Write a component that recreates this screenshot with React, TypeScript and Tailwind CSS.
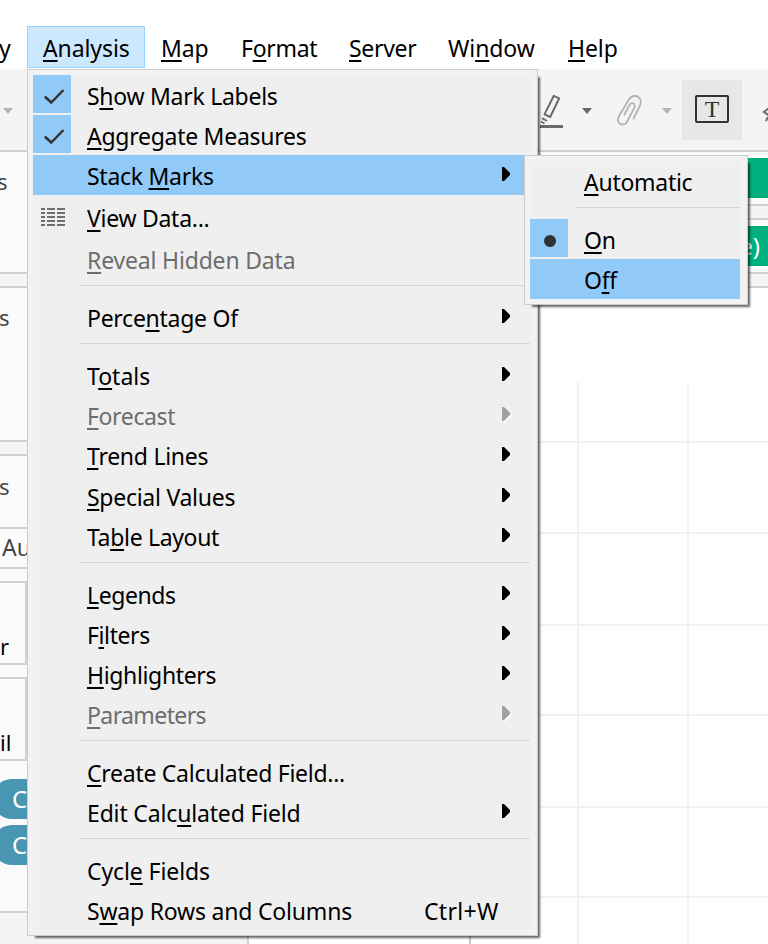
import { Fragment } from "react";
import { clsx } from "clsx";

type Item = {
  label: string;
  // index of the underlined access key
  hotkey: number;
  submenu?: boolean;
  disabled?: boolean;
  active?: boolean;
  mark?: "check" | "dot" | "grid";
  shortcut?: string;
  height?: string;
  tracking?: string;
};

const menuBar = [
  { label: "Analysis", hotkey: 0, className: "w-[118px] border border-[#99d1ff] bg-[#cce8ff] pl-[15px] leading-[42px]" },
  { label: "Map", hotkey: 0, className: "w-[80px] pl-4 leading-[44px]" },
  { label: "Format", hotkey: 1, className: "w-[108px] pl-4 leading-[44px] tracking-[-0.3px]" },
  { label: "Server", hotkey: 0, className: "w-[99px] pl-4 leading-[44px] tracking-[-0.3px]" },
  { label: "Window", hotkey: 2, className: "w-[120px] pl-4 leading-[44px]" },
  { label: "Help", hotkey: 0, className: "w-[90px] pl-4 leading-[44px]" },
];

const analysisMenu: Item[][] = [
  [
    { label: "Show Mark Labels", hotkey: 1, mark: "check" },
    { label: "Aggregate Measures", hotkey: 0, mark: "check" },
    { label: "Stack Marks", hotkey: 6, submenu: true, active: true },
    { label: "View Data...", hotkey: 0, mark: "grid", height: "h-11 py-0.5" },
    { label: "Reveal Hidden Data", hotkey: 0, disabled: true, tracking: "tracking-[-0.18px]" },
  ],
  [{ label: "Percentage Of", hotkey: 5, submenu: true }],
  [
    { label: "Totals", hotkey: 1, submenu: true, tracking: "tracking-normal" },
    { label: "Forecast", hotkey: 0, submenu: true, disabled: true, tracking: "tracking-[-0.37px]" },
    { label: "Trend Lines", hotkey: 0, submenu: true, height: "h-[41px] pb-px" },
    { label: "Special Values", hotkey: 0, submenu: true },
    { label: "Table Layout", hotkey: 2, submenu: true, tracking: "tracking-[-0.33px]" },
  ],
  [
    { label: "Legends", hotkey: 0, submenu: true, tracking: "tracking-[-0.4px]" },
    { label: "Filters", hotkey: 1, submenu: true, tracking: "tracking-[-0.4px]" },
    { label: "Highlighters", hotkey: 0, submenu: true, tracking: "tracking-[-0.35px]" },
    { label: "Parameters", hotkey: 0, submenu: true, disabled: true, tracking: "tracking-[-0.6px]" },
  ],
  [
    { label: "Create Calculated Field...", hotkey: 0 },
    { label: "Edit Calculated Field", hotkey: 9, submenu: true, tracking: "tracking-[-0.16px]" },
  ],
  [
    { label: "Cycle Fields", hotkey: 4, tracking: "tracking-[-0.1px]" },
    { label: "Swap Rows and Columns", hotkey: 1, shortcut: "Ctrl+W", tracking: "tracking-[-0.2px]" },
  ],
];

const stackMenu: Item[][] = [
  [{ label: "Automatic", hotkey: 0 }],
  [
    { label: "On", hotkey: 0, mark: "dot" },
    { label: "Off", hotkey: 1, active: true },
  ],
];

function Label({ text, hotkey }: { text: string; hotkey: number }) {
  return (
    <span className="whitespace-pre">
      {text.slice(0, hotkey)}
      <span className="underline decoration-2 underline-offset-[3px] [text-decoration-skip-ink:none]">
        {text[hotkey]}
      </span>
      {text.slice(hotkey + 1)}
    </span>
  );
}

function Mark({ mark }: { mark: Item["mark"] }) {
  if (mark === "grid") {
    return (
      <svg width="38" height="38" viewBox="0 0 38 38" shapeRendering="crispEdges">
        {[12, 16, 20, 24, 28].map((y) => (
          <path key={y} d={`M8 ${y}h4M14 ${y}h8M24 ${y}h8`} stroke="#6d6d6d" strokeWidth="2" />
        ))}
      </svg>
    );
  }
  return (
    <svg width="38" height="38" viewBox="0 0 38 38" className="bg-[#91c9f7]">
      {mark === "check" ? (
        <path d="M11.8 21.5l6.4 6L30.5 15" fill="none" stroke="#333" strokeWidth="2.4" />
      ) : (
        <circle cx="20" cy="22" r="6" fill="#2f3333" />
      )}
    </svg>
  );
}

function SubmenuArrow({ disabled }: { disabled?: boolean }) {
  return (
    <svg width="10" height="16" viewBox="0 0 10 16" className="mr-[18px] shrink-0">
      {disabled && <path d="M2 2v14l8-7z" fill="#fff" />}
      <path d="M0 0h2l6 6v2l-6 6h-2z" fill={disabled ? "#a0a0a0" : "#000"} />
    </svg>
  );
}

function Menu({ groups, className }: { groups: Item[][]; className: string }) {
  return (
    <div
      className={clsx(
        "absolute border border-[#ccc] bg-[#f2f2f2] py-[5px] pl-[5px] pr-[7px] shadow-[5px_5px_2px_-3px_rgba(0,0,0,0.6)]",
        className
      )}
    >
      <div className="bg-[#efefef]">
        {groups.map((group, i) => (
          <Fragment key={i}>
            {i > 0 && (
              <div className="h-[18px] pl-[46px] pt-1.5">
                <div className="h-px bg-[#d7d7d7]" />
              </div>
            )}
            {group.map((item) => (
              <div
                key={item.label}
                className={clsx(
                  "flex",
                  item.height ?? "h-10",
                  item.tracking ?? "tracking-[-0.27px]",
                  item.active && "bg-[#91c9f7]",
                  item.disabled ? "text-[#6d6d6d]" : "text-black"
                )}
              >
                <div className="w-[54px] shrink-0">{item.mark && <Mark mark={item.mark} />}</div>
                <div className="flex-1 leading-[42px]">
                  <Label text={item.label} hotkey={item.hotkey} />
                </div>
                {item.shortcut && <div className="w-[106px] tracking-[0.3px] leading-[42px]">{item.shortcut}</div>}
                {item.submenu && (
                  <div className="flex h-10 items-center">
                    <SubmenuArrow disabled={item.disabled} />
                  </div>
                )}
              </div>
            ))}
          </Fragment>
        ))}
      </div>
    </div>
  );
}

function Caret({ color, className }: { color: string; className?: string }) {
  return (
    <svg width="10" height="6" viewBox="0 0 10 6" className={clsx("shrink-0", className)}>
      <path d="M0 0h10L5 6z" fill={color} />
    </svg>
  );
}

function Toolbar() {
  return (
    <div className="flex h-[83px] items-start border-b-2 border-[#d1d1d1] bg-[#f4f4f4]">
      <Caret color="#b3b3b3" className="ml-[3px] mt-[39px]" />
      <svg width="24" height="36" viewBox="0 0 24 36" className="ml-[526px] mt-6 shrink-0" fill="none" stroke="#6a6a6a" strokeWidth="2">
        <path d="M14.8 2.8L20.2 5.300 11.200 24 5.500 21.400z" strokeLinejoin="round" />
        <path d="M3 25.200l5 2.800M2 28.500l3.500 2" />
        <path d="M1 33.500h23" strokeWidth="3" />
      </svg>
      <Caret color="#6a6a6a" className="ml-[19px] mt-[39px]" />
      <svg width="26" height="32" viewBox="0 0 26 32" className="ml-6 mt-[25px] shrink-0" fill="none" stroke="#b3b3b3" strokeWidth="1.8" strokeLinecap="round">
        <path d="M17.500 24.500L23.500 12.500C27 5.500 22.500 2 19 2c-4 0-5.500 2-7 5L3 22c-4 8.500 5.500 11.500 8.500 5l6.700-13c2-5-3-6.500-5-2.500L8.500 20.500" />
      </svg>
      <Caret color="#b3b3b3" className="ml-5 mt-[39px]" />
      <div className="ml-[10px] mt-[11px] flex h-[60px] w-[60px] shrink-0 items-start justify-center bg-[#e6e8e8] pt-[15px]">
        <div className="h-7 w-[34px] rounded-xs border-2 border-[#333] text-center font-['Liberation_Serif',serif] text-2xl leading-[25px] text-[#333]">
          T
        </div>
      </div>
      <svg width="6" height="20" viewBox="0 0 6 20" className="ml-5 mt-[34px] shrink-0" fill="none" stroke="#6a6a6a" strokeWidth="2">
        <path d="M7 5L2 9l5 3.500M4 18l2-4" />
      </svg>
    </div>
  );
}

function SidePanel() {
  const heading = "bg-[#fafafa] text-[22px] text-[#444] border-[#d1d1d1]";
  const card = "mt-3 flex h-[84px] w-[27px] items-end border-y-2 border-r-2 border-[#d1d1d1] leading-[34px] text-black";
  const pill = "-ml-2 h-10 w-[200px] rounded-full bg-[#4996b2] pl-5 text-2xl leading-[39px] text-white";
  return (
    <div className="w-[249px] shrink-0 border-r-2 border-[#d1d1d1] bg-[#f4f4f4]">
      <div className={clsx(heading, "h-[122px] border-b-2 pt-[13px] leading-8")}>
        <span className="-ml-[3px]">s</span>
      </div>
      <div className={clsx(heading, "mt-3 h-[156px] border-y-2 pt-[13px] leading-8")}>
        <span className="-ml-px">s</span>
      </div>
      <div className={clsx(heading, "mt-3 h-[459px] border-y-2 pt-[14px]")}>
        <div className="h-[57px] leading-8">
          <span className="-ml-px">s</span>
        </div>
        <div className="h-[42px] border-y-2 border-[#d1d1d1] bg-[#fcfcfc] pl-0.5 text-[23px] leading-[37px]">Au</div>
        <div className={card}>r</div>
        <div className={card}>il</div>
        <div className={clsx(pill, "mt-[18px]")}>C</div>
        <div className={clsx(pill, "mt-1.5")}>C</div>
      </div>
    </div>
  );
}

function Canvas() {
  return (
    <div className="flex flex-1 flex-col">
      <div className="h-[54px] border-b-2 border-[#d1d1d1] bg-[#fafafa] pt-1.5">
        <div className="h-10 bg-[#00b180]" />
      </div>
      <div className="h-[82px] border-b-2 border-[#d1d1d1] bg-[#f4f4f4] pt-3">
        <div className="border-y-2 border-[#d1d1d1] bg-[#fafafa] py-1.5">
          <div className="h-10 bg-[#00b180] pr-2 text-right text-2xl leading-[39px] text-white">e)</div>
        </div>
      </div>
      <svg className="block flex-1" width="519" viewBox="0 0 519 656" shapeRendering="crispEdges" fill="none" stroke="#f1f1f1" strokeWidth="2">
        <path d="M329 94v562M439 94v562" />
        {[154, 245, 337, 427, 519, 609].map((y) => (
          <path key={y} d={`M222 ${y}h297`} />
        ))}
        <path d="M221 154v502" stroke="#c8c8c8" />
      </svg>
    </div>
  );
}

export default function App() {
  return (
    <div className="relative flex h-[944px] w-[768px] flex-col overflow-hidden bg-white font-['Noto_Sans',sans-serif] text-[23px] text-black">
      <div className="flex h-[69px] shrink-0 pt-[26px] tracking-[-0.1px]">
        <div className="w-[27px] shrink-0 leading-[44px]">
          <span className="-ml-px">y</span>
        </div>
        {menuBar.map(({ label, hotkey, className }) => (
          <div key={label} className={clsx("h-[42px] shrink-0", className)}>
            <Label text={label} hotkey={hotkey} />
          </div>
        ))}
      </div>
      <Toolbar />
      <div className="flex flex-1">
        <SidePanel />
        <Canvas />
      </div>
      <Menu groups={analysisMenu} className="left-[27px] top-[69px] w-[511px]" />
      <Menu groups={stackMenu} className="left-[524px] top-[155px] w-[224px]" />
    </div>
  );
}
